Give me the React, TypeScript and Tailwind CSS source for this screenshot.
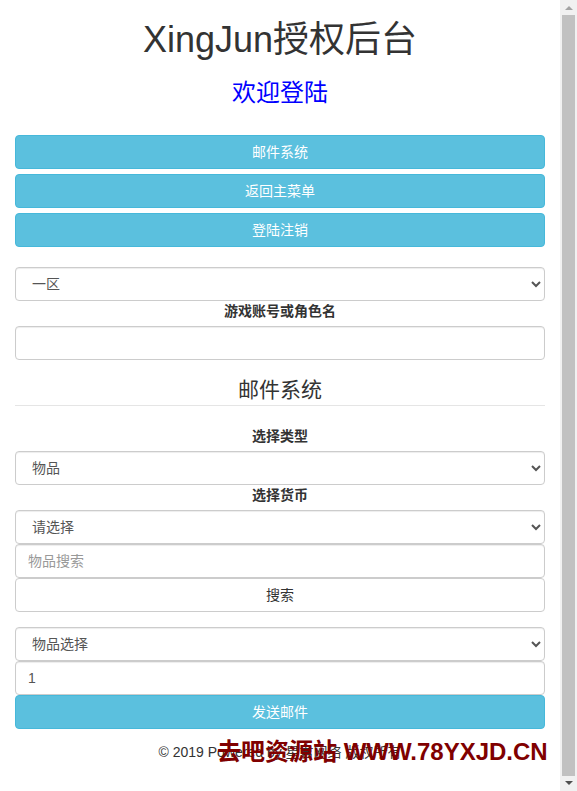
import React from "react";

const FONT = "font-['Liberation_Sans','Noto_Sans_CJK_SC',sans-serif]";

function InfoButton({ children, className = "" }: { children: React.ReactNode; className?: string }) {
  return (
    <button
      type="button"
      className={`block h-[34px] w-full rounded-[4px] border border-[#46b8da] bg-[#5bc0de] text-center text-[14px] leading-[20px] text-white ${className}`}
    >
      {children}
    </button>
  );
}

function Select({ value, options }: { value: string; options: string[] }) {
  return (
    <select
      defaultValue={value}
      className="block h-[34px] w-full rounded-[4px] border border-[#ccc] bg-white px-[12px] text-[14px] leading-[20px] text-[#555] shadow-[inset_0_1px_1px_rgba(0,0,0,0.075)]"
    >
      {options.map((o) => (
        <option key={o}>{o}</option>
      ))}
    </select>
  );
}

function Input({ placeholder, value }: { placeholder?: string; value?: string }) {
  return (
    <input
      type="text"
      placeholder={placeholder}
      defaultValue={value}
      className="block h-[34px] w-full rounded-[4px] border border-[#ccc] bg-white px-[12px] text-[14px] leading-[20px] text-[#555] shadow-[inset_0_1px_1px_rgba(0,0,0,0.075)] placeholder:text-[#999]"
    />
  );
}

function Label({ children }: { children: React.ReactNode }) {
  return (
    <label className="mb-[5px] block text-center text-[14px] font-bold leading-[20px] text-[#333]">
      {children}
    </label>
  );
}

export default function App() {
  return (
    <div className={`flex h-[791px] w-[577px] overflow-hidden bg-white ${FONT}`}>
      <div className="flex-1 px-[15px]">
        <h1 className="mt-[20px] text-center text-[36px] font-normal leading-[39.6px] text-[#333]">
          XingJun授权后台
        </h1>
        <h3 className="mt-[20px] text-center text-[24px] font-normal leading-[26.4px] text-[#0000ff]">
          欢迎登陆
        </h3>

        <div className="mt-[29px] flex flex-col gap-[5px]">
          <InfoButton>邮件系统</InfoButton>
          <InfoButton>返回主菜单</InfoButton>
          <InfoButton>登陆注销</InfoButton>
        </div>

        <div className="mt-[20px]">
          <Select value="一区" options={["一区", "二区", "三区"]} />
          <Label>游戏账号或角色名</Label>
          <Input />
        </div>

        <div className="mt-[15px] border-b border-[#e5e5e5] text-center text-[21px] leading-[30px] text-[#333]">
          邮件系统
        </div>

        <div className="mt-[20px]">
          <Label>选择类型</Label>
          <Select value="物品" options={["物品", "货币"]} />
          <Label>选择货币</Label>
          <Select value="请选择" options={["请选择"]} />
          <Input placeholder="物品搜索" />
          <button
            type="button"
            className="block h-[34px] w-full rounded-[4px] border border-[#ccc] bg-white text-center text-[14px] leading-[20px] text-[#333]"
          >
            搜索
          </button>
        </div>

        <div className="mt-[15px]">
          <Select value="物品选择" options={["物品选择"]} />
          <Input value="1" />
          <InfoButton>发送邮件</InfoButton>
        </div>

        <div className="relative mt-[13px] text-center text-[14px] leading-[20px] text-[#333]">
          © 2019 Powered by 星君网络 版权所有
          <div className="absolute left-[202px] top-[-5px] whitespace-nowrap text-[24px] font-bold leading-[29px] text-[#800000]">
            去吧资源站 WWW.78YXJD.CN
          </div>
        </div>
      </div>

      <div className="flex w-[17px] flex-col bg-[#f1f1f1]">
        <div className="flex h-[15px] items-center justify-center">
          <svg width="8" height="5" viewBox="0 0 8 5">
            <path d="M0 5 L4 1 L8 5 Z" fill="#a3a3a3" />
          </svg>
        </div>
        <div className="mx-[2px] flex-1 bg-[#c1c1c1]" />
        <div className="flex h-[15px] items-center justify-center">
          <svg width="8" height="5" viewBox="0 0 8 5">
            <path d="M0 0 L8 0 L4 4 Z" fill="#505050" />
          </svg>
        </div>
      </div>
    </div>
  );
}
